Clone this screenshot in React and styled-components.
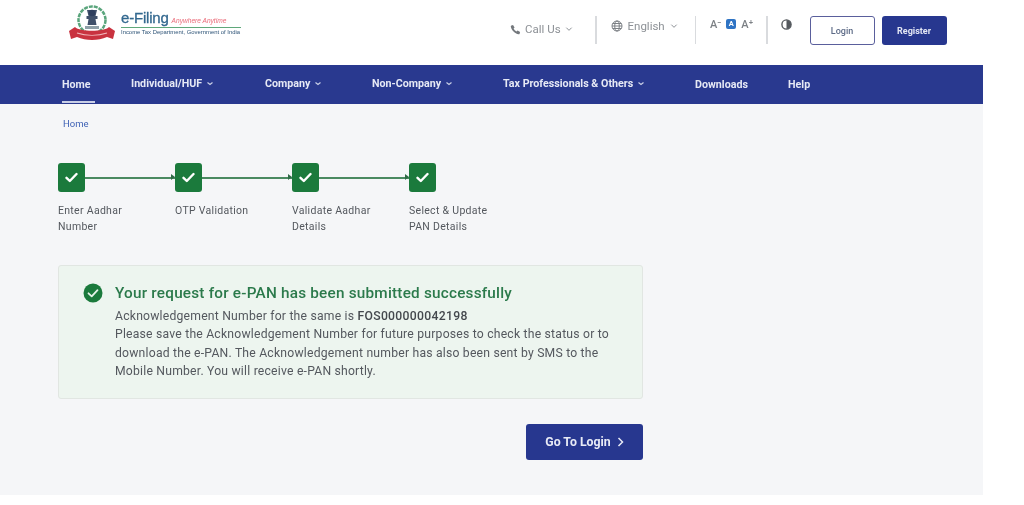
import React from "react";
import styled, { createGlobalStyle } from "styled-components";

const Global = createGlobalStyle`
  html, body { margin: 0; padding: 0; background: #fff; }
  body { font-family: Roboto, "Liberation Sans", sans-serif; }
`;

const Page = styled.div`
  width: 983px;
  height: 495px;
  display: flex;
  flex-direction: column;
  background: #f5f6f8;
  filter: blur(0.55px);
  overflow: hidden;
`;

const Header = styled.header`
  height: 65px;
  background: #fff;
  display: flex;
  align-items: flex-start;
  padding-left: 68px;
  box-sizing: border-box;
  flex: none;
`;

const Brand = styled.div`
  display: flex;
  align-items: flex-start;
  gap: 5px;
  padding-top: 5px;
  width: 442px;
  flex: none;
`;

const BrandText = styled.div`
  display: flex;
  flex-direction: column;
  padding-top: 4px;
`;

const BrandTop = styled.div`
  display: flex;
  align-items: baseline;
  gap: 3px;
  border-bottom: 1.5px solid #5fa87a;
  padding-bottom: 1px;
  line-height: 15px;
  width: 120px;
`;

const BrandName = styled.span`
  font: 400 15px "Liberation Sans", sans-serif;
  letter-spacing: -0.2px;
  color: #33688f;
  -webkit-text-stroke: 0.3px #33688f;
`;

const Tagline = styled.span`
  font: italic 400 6.6px "Liberation Sans", sans-serif;
  color: #ea6a78;
`;

const BrandSub = styled.span`
  font: 400 5.9px "Liberation Sans", sans-serif;
  color: #2f5578;
  line-height: 9px;
  white-space: nowrap;
`;

const Tools = styled.div`
  display: flex;
  align-items: flex-start;
  padding-top: 16px;
`;

const ToolGroup = styled.div`
  display: flex;
  align-items: center;
  gap: ${(p) => p.$gap || 4}px;
  width: ${(p) => p.$w}px;
  height: ${(p) => p.$h}px;
  padding-top: ${(p) => p.$top || 0}px;
  color: #8d9196;
  font-size: 11.5px;
  flex: none;
  box-sizing: border-box;
`;

const Divider = styled.div`
  width: 1.5px;
  height: 28px;
  background: #d9dbde;
  flex: none;
  margin-right: ${(p) => p.$mr}px;
`;

const Letter = styled.span`
  color: #7c8085;
  font: 500 11px Roboto, sans-serif;
`;

const ActiveLetter = styled.span`
  width: 10px;
  height: 10px;
  border-radius: 2px;
  background: #2f74c4;
  color: #fff;
  font: 700 7.5px/10px Roboto, sans-serif;
  text-align: center;
`;

const LoginBtn = styled.button`
  width: 65px;
  height: 29px;
  box-sizing: border-box;
  margin-right: 7px;
  background: #fff;
  border: 1.5px solid #5a5f9c;
  border-radius: 3px;
  color: #5c6a86;
  font: 500 9px Roboto, sans-serif;
  padding: 0;
`;

const RegisterBtn = styled.button`
  width: 65px;
  height: 29px;
  background: #27378f;
  border: 0;
  border-radius: 3px;
  color: #e4e7f4;
  font: 700 9px Roboto, sans-serif;
  padding: 0;
`;

const Nav = styled.nav`
  height: 39px;
  background: #29398f;
  display: flex;
  padding-left: 62px;
  box-sizing: border-box;
  flex: none;
`;

const NavItem = styled.div`
  width: ${(p) => p.$w}px;
  flex: none;
  height: 100%;
  box-sizing: border-box;
  padding-top: ${(p) => p.$top}px;
  color: #e6e9f5;
  font-size: 10.7px;
  font-weight: 700;
  white-space: nowrap;
  display: flex;
  gap: 5px;
  align-items: flex-start;
`;

const HomeLabel = styled.span`
  display: block;
  width: 33px;
  height: 23px;
  border-bottom: 2px solid #c9cfe6;
`;

const CaretIcon = styled.svg`
  margin-top: 4px;
  flex: none;
`;

const Main = styled.main`
  flex: 1;
  padding: 14px 0 0 58px;
  display: flex;
  flex-direction: column;
  background: #f5f6f8;
`;

const Crumb = styled.a`
  color: #3f62b5;
  font-size: 9.5px;
  line-height: 12px;
  margin-left: 5px;
`;

const Stepper = styled.div`
  display: flex;
  margin-top: 33px;
`;

const Step = styled.div`
  width: 117px;
  flex: none;
`;

const StepHead = styled.div`
  display: flex;
  align-items: center;
  height: 29px;
`;

const StepBox = styled.div`
  width: 27px;
  height: 29px;
  border-radius: 3px;
  background: #1b7a3c;
  display: flex;
  align-items: center;
  justify-content: center;
  flex: none;
`;

const Connector = styled.div`
  flex: 1;
  height: 2px;
  background: #4a8a61;
  position: relative;
  &::after {
    content: "";
    position: absolute;
    right: 0;
    top: -2.5px;
    border-left: 4px solid #2f6b46;
    border-top: 3.5px solid transparent;
    border-bottom: 3.5px solid transparent;
  }
`;

const StepLabel = styled.div`
  margin-top: 11px;
  width: 100px;
  font-size: 10.5px;
  line-height: 15.5px;
  letter-spacing: 0.3px;
  color: #54585e;
`;

const Card = styled.section`
  margin-top: 31px;
  width: 585px;
  height: 134px;
  box-sizing: border-box;
  display: flex;
  gap: 12px;
  padding: 17px 20px 0 24px;
  background: #edf5ef;
  border: 1px solid #e1e6e2;
  border-radius: 3px;
`;

const CardBody = styled.div`
  color: #54585e;
  font-size: 12.2px;
  line-height: 18.4px;
  letter-spacing: 0.21px;
`;

const CardTitle = styled.h2`
  margin: 0 0 3px;
  font-size: 15.3px;
  line-height: 21px;
  font-weight: 500;
  color: #2b7a4b;
  letter-spacing: 0.22px;
`;

const Ack = styled.b`
  font-weight: 500;
  color: #44484d;
  letter-spacing: 0.3px;
`;

const Actions = styled.div`
  width: 585px;
  display: flex;
  justify-content: flex-end;
  margin-top: 25px;
`;

const GoBtn = styled.button`
  width: 117px;
  height: 36px;
  background: #27378f;
  color: #e8ebf6;
  border: 0;
  border-radius: 3px;
  font: 700 12.3px Roboto, sans-serif;
  display: flex;
  align-items: center;
  justify-content: center;
  gap: 6px;
  padding: 0;
`;

const Emblem = () => (
  <svg width="48" height="36" viewBox="0 0 48 36">
    <circle cx="24" cy="15" r="13.5" fill="none" stroke="#5aa57c" strokeWidth="2.5" strokeDasharray="4 1" />
    <path d="M19 5h10l-1.5 6h2v3h-2l1 6h-9l1-6h-2v-3h2z" fill="#40506a" />
    <circle cx="24" cy="8" r="3.2" fill="#2f3f5e" />
    <path d="M17 21h14v3H17z" fill="#8fa0a8" />
    <path d="M1 26 7 22c5 5 29 5 34 0l6 4-2 8-6-2c-9 4-21 4-30 0l-6 2z" fill="#c9323f" />
    <path d="M9 28c9 3 21 3 30 0" stroke="#f1b7bb" strokeWidth="1.2" fill="none" />
  </svg>
);

const Phone = () => (
  <svg width="11" height="11" viewBox="0 0 24 24" fill="#74787d">
    <path d="M6.6 2 10 7.4 7.8 10c1.2 2.6 3.4 4.8 6.2 6.2l2.6-2.2L22 17.4l-1 3.6c-.3 1-1.3 1.5-2.3 1.3C10.5 20.7 3.3 13.5 1.7 5.3 1.5 4.3 2 3.300 3 3z" />
  </svg>
);

const Globe = () => (
  <svg width="12" height="12" viewBox="0 0 24 24" fill="none" stroke="#7c8085" strokeWidth="2">
    <circle cx="12" cy="12" r="10" />
    <ellipse cx="12" cy="12" rx="4.5" ry="10" />
    <path d="M2 12h20M3.5 7h17M3.5 17h17" />
  </svg>
);

const Chevron = () => (
  <svg width="8" height="8" viewBox="0 0 12 12" fill="none" stroke="#8d9196" strokeWidth="1.5">
    <path d="M2 4l4 4 4-4" />
  </svg>
);

const Contrast = () => (
  <svg width="11" height="11" viewBox="0 0 24 24">
    <circle cx="12" cy="12" r="10" fill="none" stroke="#55595e" strokeWidth="3" />
    <path d="M12 2a10 10 0 0 1 0 20z" fill="#55595e" />
  </svg>
);

const Caret = () => (
  <CaretIcon width="6" height="5" viewBox="0 0 6 5" fill="none" stroke="#c9cfe6" strokeWidth="1.2">
    <path d="M.5 1.5 3 3.5 5.5 1.5" />
  </CaretIcon>
);

const Check = () => (
  <svg width="13" height="11" viewBox="0 0 13 11" fill="none" stroke="#fff" strokeWidth="2.4" strokeLinecap="round" strokeLinejoin="round">
    <path d="M1.5 5.8 4.8 9 11.5 2" />
  </svg>
);

const SuccessIcon = () => (
  <svg width="20" height="20" viewBox="0 0 20 20" style={{ flex: "none" }}>
    <circle cx="10" cy="10" r="9.5" fill="#1b7a3c" />
    <path d="M5.5 10.3 8.7 13.3 14.5 7.2" fill="none" stroke="#e7f4ea" strokeWidth="1.8" strokeLinecap="round" strokeLinejoin="round" />
  </svg>
);

const ChevronRight = () => (
  <svg width="7" height="10" viewBox="0 0 7 10" fill="none" stroke="#e8ebf6" strokeWidth="1.5">
    <path d="M1.5 1 5.5 5 1.5 9" />
  </svg>
);

const navItems = [
  { label: "Individual/HUF", w: 134 },
  { label: "Company", w: 107 },
  { label: "Non-Company", w: 131 },
  { label: "Tax Professionals & Others", w: 192 },
];

const steps = [
  ["Enter Aadhar", "Number"],
  ["OTP Validation"],
  ["Validate Aadhar", "Details"],
  ["Select & Update", "PAN Details"],
];

export default function App() {
  return (
    <>
      <Global />
      <Page>
        <Header>
          <Brand>
            <Emblem />
            <BrandText>
              <BrandTop>
                <BrandName>e-Filing</BrandName>
                <Tagline>Anywhere Anytime</Tagline>
              </BrandTop>
              <BrandSub>Income Tax Department, Government of India</BrandSub>
            </BrandText>
          </Brand>
          <Tools>
            <ToolGroup $w={85} $h={24} $top={2}>
              <Phone />
              <span>Call Us</span>
              <Chevron />
            </ToolGroup>
            <Divider $mr={14} />
            <ToolGroup $w={84} $h={20} $gap={5}>
              <Globe />
              <span>English</span>
              <Chevron />
            </ToolGroup>
            <Divider $mr={14} />
            <ToolGroup $w={56} $h={16} $gap={5}>
              <Letter>A⁻</Letter>
              <ActiveLetter>A</ActiveLetter>
              <Letter>A⁺</Letter>
            </ToolGroup>
            <Divider $mr={13} />
            <ToolGroup $w={29} $h={16}>
              <Contrast />
            </ToolGroup>
            <LoginBtn>Login</LoginBtn>
            <RegisterBtn>Register</RegisterBtn>
          </Tools>
        </Header>
        <Nav>
          <NavItem $w={69} $top={13}>
            <HomeLabel>Home</HomeLabel>
          </NavItem>
          {navItems.map((n) => (
            <NavItem key={n.label} $w={n.w} $top={12}>
              {n.label}
              <Caret />
            </NavItem>
          ))}
          <NavItem $w={93} $top={13}>Downloads</NavItem>
          <NavItem $w={40} $top={13}>Help</NavItem>
        </Nav>
        <Main>
          <Crumb>Home</Crumb>
          <Stepper>
            {steps.map((lines, i) => (
              <Step key={lines[0]}>
                <StepHead>
                  <StepBox>
                    <Check />
                  </StepBox>
                  {i < steps.length - 1 && <Connector />}
                </StepHead>
                <StepLabel>
                  {lines.map((l) => (
                    <div key={l}>{l}</div>
                  ))}
                </StepLabel>
              </Step>
            ))}
          </Stepper>
          <Card>
            <SuccessIcon />
            <CardBody>
              <CardTitle>Your request for e-PAN has been submitted successfully</CardTitle>
              Acknowledgement Number for the same is <Ack>FOS000000042198</Ack>
              <br />
              Please save the Acknowledgement Number for future purposes to check the status or to
              <br />
              download the e-PAN. The Acknowledgement number has also been sent by SMS to the
              <br />
              Mobile Number. You will receive e-PAN shortly.
            </CardBody>
          </Card>
          <Actions>
            <GoBtn>
              Go To Login
              <ChevronRight />
            </GoBtn>
          </Actions>
        </Main>
      </Page>
    </>
  );
}
